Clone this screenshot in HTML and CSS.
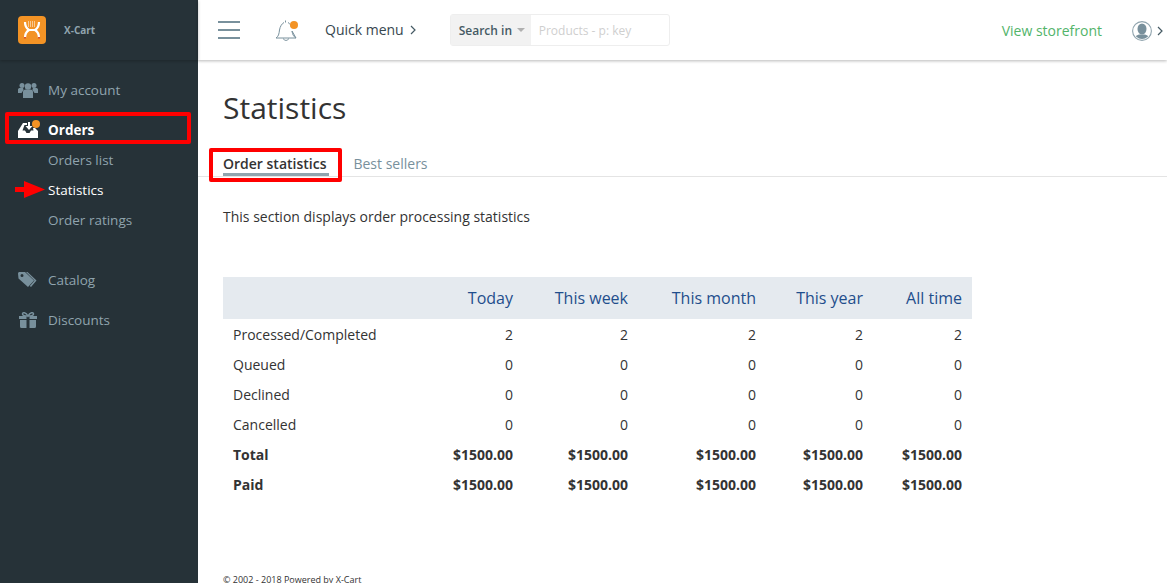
FILE: index.html
```html
<!DOCTYPE html>
<html lang="en">
<head>
<meta charset="utf-8">
<title>Statistics</title>
<link rel="stylesheet" href="styles.css">
</head>
<body>
<div class="app">
  <aside class="sidebar">
    <div class="brand">
      <svg class="logo" viewBox="0 0 28 28" width="28" height="28">
        <rect width="28" height="28" rx="4" fill="#f39325"/>
        <path d="M7 6c0 4 1.500 6.500 4 8-2.500 1.500-4 4-4 8M21 6c0 4-1.500 6.500-4 8 2.500 1.500 4 4 4 8M11 14h6" fill="none" stroke="#fff" stroke-width="2.200"/>
        <path d="M10 6h8M10 8h8M10 10h8" stroke="#fff" stroke-width="1" stroke-dasharray="1 1"/>
        <path d="M7 21v1.500M21 21v1.500" stroke="#d9552b" stroke-width="2.200"/>
      </svg>
      <span class="brand-name">X-Cart</span>
    </div>
    <nav class="nav">
      <a class="nav-item nav-first">
        <svg class="nav-icon" viewBox="0 0 20 16" width="20" height="16"><g fill="#78909c"><circle cx="4" cy="3.500" r="2.500"/><circle cx="16" cy="3.500" r="2.500"/><circle cx="10" cy="4.500" r="3.200"/><path d="M0 7.500c0-1 1-1.500 2-1.500h3c.5 1 .5 1.500 .5 2L3.500 11H0zM20 7.500c0-1-1-1.500-2-1.500h-3c-.5 1-.5 1.500-.5 2l2 3H20zM5 10c0-1.500 1-2.500 2.500-2.500h5C14 7.500 15 8.500 15 10v6H5z"/></g></svg>
        <span>My account</span>
      </a>
      <a class="nav-item nav-active">
        <span class="icon-wrap">
          <svg class="nav-icon" viewBox="0 0 20 16" width="20" height="16"><path fill="#fff" d="M5 1h4v2H6.500L4.500 8.500H7L8.500 11h3L13 8.500h2.500L15 6h2l3 3v7H0V9z"/><path fill="#fff" d="M10 0h2v4h2.500L11 8 7.500 4H10z"/></svg>
          <span class="dot dot-nav"></span>
        </span>
        <span>Orders</span>
      </a>
      <a class="nav-item sub">Orders list</a>
      <a class="nav-item sub sub-current">Statistics</a>
      <a class="nav-item sub">Order ratings</a>
      <a class="nav-item nav-group">
        <svg class="nav-icon" viewBox="0 0 20 16" width="20" height="16"><g fill="#78909c"><path d="M0 1.500C0 .7.700 0 1.500 0H7l9 8.500L10 15 .5 6.500zM4 5a1.500 1.500 0 1 0 0-3 1.500 1.500 0 0 0 0 3z" fill-rule="evenodd"/><path d="M9.500 0 18.500 8.500 13 15l-1.200-1L16.500 8.500 8 0z"/></g></svg>
        <span>Catalog</span>
      </a>
      <a class="nav-item nav-last">
        <svg class="nav-icon" viewBox="0 0 20 16" width="20" height="16"><g fill="#78909c"><path d="M1 4h7.500v3H1zM11.500 4H19v3h-7.500zM2 8h6.500v8H3.500A1.500 1.500 0 0 1 2 14.500zM11.500 8H18v6.500a1.500 1.500 0 0 1-1.500 1.500h-5z"/></g><path d="M10 4C8 0 4.500 0 4.500 2S8 4 10 4c2 0 5.500 0 5.500-2S12 0 10 4z" fill="none" stroke="#78909c" stroke-width="1.500"/></svg>
        <span>Discounts</span>
      </a>
    </nav>
  </aside>
  <div class="main">
    <header class="topbar">
      <div class="burger"><i></i><i></i><i></i></div>
      <span class="bell">
        <svg viewBox="0 0 22 22" width="22" height="22"><path d="M1 18c2.500-1.500 3-4 3.500-8C5 6.500 7 3.500 9 2.500M13 2.500c2 1 3 3 3.500 5M17 11c.5 3.500 1.500 5.500 4 7zM1 18h20M8.500 18.500c0 2.500 5 2.500 5 0M10.500 .5v2" fill="none" stroke="#78909c" stroke-width="1"/></svg>
        <span class="dot dot-bell"></span>
      </span>
      <span class="quick">Quick menu<svg class="chev" viewBox="0 0 6 10" width="6" height="10"><path d="M1 1l4 4-4 4" fill="none" stroke="#455a64" stroke-width="1.200"/></svg></span>
      <div class="search">
        <span class="search-in">Search in<i class="caret"></i></span>
        <span class="search-input">Products - p: key</span>
      </div>
      <a class="storefront">View storefront</a>
      <span class="user">
        <svg viewBox="0 0 20 20" width="20" height="20"><defs><clipPath id="uc"><circle cx="10" cy="10" r="8"/></clipPath></defs><g clip-path="url(#uc)" fill="#78909c"><ellipse cx="10" cy="8" rx="4.500" ry="5.500"/><path d="M1 20c0-4 3.500-5.500 6-6.500h6c2.500 1 6 2.500 6 6.500z"/></g><circle cx="10" cy="10" r="9.400" fill="none" stroke="#90a4ae" stroke-width="1.100"/></svg>
        <svg class="chev-user" viewBox="0 0 6 10" width="6" height="10"><path d="M1 1l4 4-4 4" fill="none" stroke="#455a64" stroke-width="1.200"/></svg>
      </span>
    </header>
    <main class="content">
      <h1 class="title">Statistics</h1>
      <div class="tabs">
        <a class="tab tab-active">Order statistics</a>
        <a class="tab">Best sellers</a>
      </div>
      <p class="desc">This section displays order processing statistics</p>
      <table class="stats">
        <thead>
          <tr><th></th><th class="c1">Today</th><th class="c2">This week</th><th class="c3">This month</th><th class="c4">This year</th><th class="c5">All time</th></tr>
        </thead>
        <tbody>
          <tr><td>Processed/Completed</td><td>2</td><td>2</td><td>2</td><td>2</td><td>2</td></tr>
          <tr><td>Queued</td><td>0</td><td>0</td><td>0</td><td>0</td><td>0</td></tr>
          <tr><td>Declined</td><td>0</td><td>0</td><td>0</td><td>0</td><td>0</td></tr>
          <tr><td>Cancelled</td><td>0</td><td>0</td><td>0</td><td>0</td><td>0</td></tr>
          <tr class="sum"><td>Total</td><td>$1500.00</td><td>$1500.00</td><td>$1500.00</td><td>$1500.00</td><td>$1500.00</td></tr>
          <tr class="sum"><td>Paid</td><td>$1500.00</td><td>$1500.00</td><td>$1500.00</td><td>$1500.00</td><td>$1500.00</td></tr>
        </tbody>
      </table>
      <footer class="foot">© 2002 - 2018 Powered by X-Cart</footer>
    </main>
  </div>
</div>
<div class="mark mark-orders"></div>
<div class="mark mark-tab"></div>
<svg class="mark-arrow" viewBox="0 0 30 17" width="30" height="17"><path fill="#f00" d="M0 6h9V0l21 8.500L9 17v-6H0z"/></svg>
</body>
</html>
```
FILE: styles.css
```css
* { box-sizing: border-box; }
html, body { margin: 0; height: 100%; overflow: hidden; }
body { font-family: "Open Sans", "Liberation Sans", sans-serif; font-size: 14px; color: #333; background: #fff; }
.app { display: flex; height: 583px; overflow: hidden; }

.sidebar { width: 198px; flex: none; background: #263238; color: #90a4ae; }
.brand { height: 60px; padding: 16px 0 0 18px; display: flex; align-items: flex-start; box-shadow: 0 1px 3px rgba(0,0,0,.25); }
.logo { display: block; }
.brand-name { margin: 7px 0 0 18px; font-size: 10px; font-weight: 700; line-height: 14px; color: #90a4ae; }
.nav { display: flex; flex-direction: column; font-size: 13.5px; }
.nav-item { height: 30px; display: flex; align-items: center; padding-left: 18px; gap: 10px; line-height: 30px; }
.nav-first { margin-top: 15px; margin-bottom: 10px; }
.nav-active { color: #fff; font-weight: 700; }
.nav-group { margin-top: 30px; margin-bottom: 10px; }
.sub { padding-left: 48px; }
.sub-current { color: #fff; }
.nav-icon { display: block; flex: none; }
.icon-wrap { position: relative; display: block; width: 20px; height: 16px; flex: none; }
.dot { position: absolute; display: block; border-radius: 50%; background: #f39325; }
.dot-nav { width: 8px; height: 8px; left: 14px; top: -2px; }

.main { flex: 1; min-width: 0; display: flex; flex-direction: column; }
.topbar { height: 60px; flex: none; display: flex; align-items: center; padding-left: 20px; box-shadow: 0 1px 3px rgba(0,0,0,.28); position: relative; }
.burger { width: 22px; display: flex; flex-direction: column; gap: 6px; }
.burger i { display: block; height: 2px; background: #78909c; }
.bell { position: relative; display: block; width: 22px; height: 22px; margin: 2px 0 0 35px; }
.bell svg { display: block; }
.dot-bell { width: 8px; height: 8px; left: 15px; top: 1px; }
.quick { margin: -2px 0 0 28px; color: #37474f; display: flex; align-items: center; gap: 6px; }
.chev { display: block; margin-top: 1px; }
.search { margin-left: 34px; width: 220px; height: 32px; border: 1px solid #eee; border-radius: 3px; display: flex; font-size: 12px; }
.search-in { width: 80px; background: #f2f2f2; font-weight: 600; color: #455a64; display: flex; align-items: center; padding-left: 8px; gap: 5px; }
.caret { display: block; border: 4px solid transparent; border-top-color: #b0b0b0; border-bottom: 0; }
.search-input { padding-left: 8px; color: #cfcfcf; display: flex; align-items: center; }
.storefront { margin-left: auto; color: #52b46a; }
.user { margin: 2px 0 0 30px; width: 35px; flex: none; display: flex; align-items: center; gap: 5px; }
.user svg { display: block; flex: none; }

.content { padding: 0 0 0 25px; position: relative; flex: 1; }
.title { margin: 28px 0 0; font-size: 30px; font-weight: 400; line-height: 40px; color: #333; }
.tabs { margin: 16px 0 0 -25px; padding-left: 25px; height: 33px; display: flex; gap: 24px; border-bottom: 1px solid #e4e4e4; }
.tab { color: #78909c; line-height: 24px; padding-top: 8px; height: 32px; }
.tab-active { color: #333; font-weight: 600; position: relative; padding-right: 3px; }
.tab-active::after { content: ""; position: absolute; left: 0; right: 0; bottom: 0; height: 3px; background: #90a4ae; }
.desc { margin: 29px 0 0; line-height: 22px; }
.stats { margin-top: 49px; width: 749px; border-collapse: collapse; table-layout: fixed; }
.stats th { height: 42px; background: #e5eaef; font-size: 16px; font-weight: 400; color: #1f4e8c; text-align: right; padding: 0 10px; }
.stats td { height: 30px; padding: 0 10px; text-align: right; }
.stats td:first-child { text-align: left; }
.stats th:nth-child(1) { width: 200px; }
.stats th.c1 { width: 100px; }
.stats th.c2 { width: 115px; }
.stats th.c3 { width: 128px; }
.stats th.c4 { width: 107px; }
.stats th.c5 { width: 99px; }
.sum td { font-weight: 700; }
.foot { margin-top: 74px; font-size: 9px; line-height: 14px; color: #333; }

.mark { position: absolute; border: 4px solid #f00; border-radius: 2px; }
.mark-orders { left: 5px; top: 112px; width: 186px; height: 32px; }
.mark-tab { left: 209px; top: 148px; width: 133px; height: 34px; }
.mark-arrow { position: absolute; left: 15px; top: 181px; }
```
